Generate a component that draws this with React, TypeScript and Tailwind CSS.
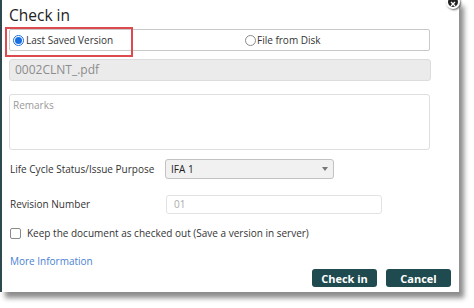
export default function App() {
  return (
    <div className="h-[308px] w-[474px] bg-white font-['Open_Sans',sans-serif]">
      <div className="relative h-[292px] w-[459px] border-l-2 border-[#2e4a50] bg-white pl-[7px] pr-[8px] pt-[4px] shadow-[5px_6px_5px_rgba(0,0,0,0.45)]">
        {/* close */}
        <div className="absolute right-[-1px] top-[-5px] flex h-[14px] w-[14px] items-center justify-center rounded-full border-2 border-white bg-[#222] shadow-[1px_1px_2px_rgba(0,0,0,0.6)]">
          <svg width="6" height="6" viewBox="0 0 6 6" className="mt-[3px]">
            <path d="M1 1 L5 5 M5 1 L1 5" stroke="white" strokeWidth="1.3" />
          </svg>
        </div>

        <h1 className="text-[15.5px] leading-[22px] text-[#222]">Check in</h1>

        <div className="relative mt-[3px] w-[421px]">
          <div className="flex h-[22px] items-center rounded-[2px] border border-[#c9c9c9] text-[10px] text-[#333]">
            <label className="flex w-[235px] items-center pl-[3px]">
              <span className="flex h-[11px] w-[11px] items-center justify-center rounded-full border border-[#1a6fe0] bg-white">
                <span className="h-[7px] w-[7px] rounded-full bg-[#1a6fe0]" />
              </span>
              <span className="ml-[2px]">Last Saved Version</span>
            </label>
            <label className="flex items-center">
              <span className="h-[11px] w-[11px] rounded-full border border-[#8a8a8a] bg-white" />
              <span className="ml-[1px]">File from Disk</span>
            </label>
          </div>
          <div className="absolute left-[-4px] top-[-2px] h-[30px] w-[128px] border-2 border-[#dc4a4f]" />
        </div>

        <div className="mt-[8px] flex h-[22px] w-[422px] items-center rounded-[3px] border border-[#dcdcdc] bg-[#ebebeb] pl-[5px] text-[12px] text-[#8c8c8c]">
          0002CLNT_.pdf
        </div>

        <div className="mt-[13px] h-[56px] w-[421px] rounded-[3px] border border-[#dedede] pl-[3px] pt-[3px] text-[10px] text-[#9a9a9a]">
          Remarks
        </div>

        <div className="mt-[9px] flex items-center text-[10px] text-[#333]">
          <span className="w-[156px] pl-[1px]">Life Cycle Status/Issue Purpose</span>
          <div className="flex h-[20px] w-[169px] items-center justify-between rounded-[3px] border border-[#c2c2c2] bg-[#f1f1f1] pl-[5px] pr-[5px] text-[#222]">
            <span>IFA 1</span>
            <span className="h-0 w-0 border-x-[3.5px] border-t-[4px] border-x-transparent border-t-[#777]" />
          </div>
        </div>

        <div className="mt-[16px] flex items-center text-[10px] text-[#333]">
          <span className="w-[157px] pl-[1px]">Revision Number</span>
          <div className="flex h-[19px] w-[216px] items-center rounded-[3px] border border-[#e2e2e2] pl-[7px] text-[#aaa]">
            01
          </div>
        </div>

        <label className="mt-[12px] flex h-[14px] items-center pl-[1px] text-[10px] text-[#333]">
          <span className="h-[11px] w-[11px] rounded-[2px] border border-[#8a8a8a] bg-white" />
          <span className="ml-[6px]">Keep the document as checked out (Save a version in server)</span>
        </label>

        <div className="mt-[14px] pl-[1px] text-[10px] leading-[14px] text-[#4a82d4]">More Information</div>

        <div className="mt-[1px] flex justify-end gap-[9px]">
          <button className="h-[18px] w-[65px] rounded-[3px] bg-[#1f4a4f] text-[11px] font-bold leading-none text-white">
            Check in
          </button>
          <button className="h-[18px] w-[65px] rounded-[3px] bg-[#1f4a4f] text-[11px] font-bold leading-none text-white">
            Cancel
          </button>
        </div>
      </div>
    </div>
  );
}
